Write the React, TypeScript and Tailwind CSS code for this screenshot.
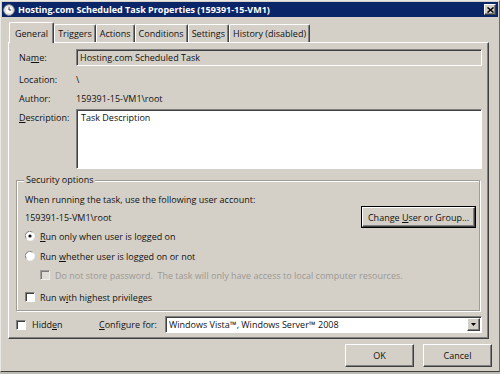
import type { ReactNode } from "react";

const raised =
  "border border-t-white border-l-white border-r-[#404040] border-b-[#404040] shadow-[inset_-1px_-1px_0_#808080]";
const sunken =
  "border border-t-[#808080] border-l-[#808080] border-r-white border-b-white shadow-[inset_1px_1px_0_#404040]";

function ClockIcon() {
  return (
    <svg width="12" height="12" viewBox="0 0 12 12">
      <circle cx="6" cy="6" r="5.3" fill="#f4f4f4" stroke="#8a8a8a" strokeWidth="1" />
      <circle cx="6" cy="6" r="3.8" fill="#fff" stroke="#c9c9c9" strokeWidth="0.6" />
      <path d="M6 3.2V6h2.2" stroke="#333" strokeWidth="1" fill="none" />
    </svg>
  );
}

function Radio({ checked }: { checked?: boolean }) {
  return (
    <svg width="10" height="10" viewBox="0 0 10 10" className="shrink-0">
      <circle cx="5" cy="5" r="4.5" fill="#fff" />
      <path d="M1.2 7.5A4.5 4.5 0 0 1 7.5 1.2" stroke="#808080" strokeWidth="1" fill="none" />
      <path d="M8.8 2.5A4.5 4.5 0 0 1 2.5 8.8" stroke="#f0f0f0" strokeWidth="1" fill="none" />
      {checked && <circle cx="5" cy="5" r="1.6" fill="#111" />}
    </svg>
  );
}

function Check({ disabled }: { disabled?: boolean }) {
  return (
    <span
      className={`block h-[10px] w-[10px] shrink-0 ${sunken} ${
        disabled ? "bg-[#e6e4df] opacity-60" : "bg-white"
      }`}
    />
  );
}

function Tab({ children, active }: { children: ReactNode; active?: boolean }) {
  if (active) {
    return (
      <div className="relative z-10 -mb-px flex h-[21px] items-center rounded-t-[2px] border border-b-0 border-t-white border-l-white border-r-[#404040] bg-[#d4d0c8] px-[5px] shadow-[inset_-1px_0_0_#808080]">
        {children}
      </div>
    );
  }
  return (
    <div className="flex h-[18px] items-center rounded-t-[2px] border border-b-0 border-t-white border-l-white border-r-[#404040] px-[3px] shadow-[inset_-1px_0_0_#808080]">
      {children}
    </div>
  );
}

function Button({ children, strong, className }: { children: ReactNode; strong?: boolean; className?: string }) {
  return (
    <div
      className={`flex items-center justify-center bg-[#d4d0c8] ${
        strong ? "outline outline-1 outline-black" : ""
      } ${raised} ${className ?? ""}`}
    >
      <span>{children}</span>
    </div>
  );
}

export default function App() {
  return (
    <div className="h-[374px] w-[500px] overflow-hidden bg-[#bdbab4] font-['Open_Sans','Noto_Sans',sans-serif] text-[9px] leading-none text-[#111]">
      <div className="flex h-[372px] flex-col border border-t-[#ebe9e4] border-l-[#ebe9e4] border-r-[#6e6c68] border-b-[#404040] bg-[#d4d0c8] px-[1px] pt-[1px]">
        {/* Title bar */}
        <div className="flex h-[15px] items-center bg-[#0b2668] pl-[1px] pr-[2px]">
          <ClockIcon />
          <span className="ml-[3px] text-[9px] font-bold text-white">
            Hosting.com Scheduled Task Properties (159391-15-VM1)
          </span>
          <div className={`ml-auto flex h-[11px] w-[12px] items-center justify-center bg-[#d4d0c8] ${raised}`}>
            <svg width="7" height="6" viewBox="0 0 7 6">
              <path d="M0.5 0.5L6.5 5.5M6.5 0.5L0.5 5.5" stroke="#000" strokeWidth="1.5" />
            </svg>
          </div>
        </div>

        {/* Tabs */}
        <div className="ml-[6px] mt-[5px] flex w-[481px] items-end pl-[1px]">
          <Tab active>General</Tab>
          <Tab>Triggers</Tab>
          <Tab>Actions</Tab>
          <Tab>Conditions</Tab>
          <Tab>Settings</Tab>
          <Tab>History (disabled)</Tab>
        </div>

        {/* Panel */}
        <div className="ml-[6px] flex h-[297px] w-[481px] flex-col border border-t-white border-l-white border-r-[#404040] border-b-[#404040] pb-[5px] pl-[10px] pr-[6px] pt-[6px] shadow-[inset_-1px_-1px_0_#808080]">
          <div className="flex h-[17px] items-center">
            <span className="w-[57px]">
              Na<u>m</u>e:
            </span>
            <div className={`flex h-full flex-1 items-center bg-[#d4d0c8] pl-[3px] ${sunken}`}>
              Hosting.com Scheduled Task
            </div>
          </div>
          <div className="mt-[4px] flex h-[19px] items-center">
            <span className="w-[57px]">Location:</span>
            <span>\</span>
          </div>
          <div className="flex h-[19px] items-center">
            <span className="w-[57px]">Author:</span>
            <span>159391-15-VM1\root</span>
          </div>
          <div className="mt-[1px] flex h-[60px]">
            <span className="w-[57px] pt-[4px]">
              <u>D</u>escription:
            </span>
            <div className={`h-full flex-1 bg-white pl-[4px] pt-[3px] ${sunken}`}>Task Description</div>
          </div>

          {/* Security options */}
          <div className="relative -ml-[3px] mr-[2px] mt-[11px] flex h-[131px] flex-col border border-[#a09d97] pl-[8px] pr-[4px] shadow-[1px_1px_0_#fff,inset_1px_1px_0_#fff]">
            <span className="absolute -top-[6px] left-[7px] bg-[#d4d0c8] px-[2px]">Security options</span>
            <div className="mt-[10px] flex h-[16px] items-center">When running the task, use the following user account:</div>
            <div className="flex h-[20px] items-center justify-between">
              <span>159391-15-VM1\root</span>
              <Button strong className="h-[20px] w-[113px]">
                Change <u>U</u>ser or Group...
              </Button>
            </div>
            <div className="flex h-[18px] items-center gap-[5px]">
              <Radio checked />
              <span>
                <u>R</u>un only when user is logged on
              </span>
            </div>
            <div className="mt-[2px] flex h-[18px] items-center gap-[5px]">
              <Radio />
              <span>
                Run <u>w</u>hether user is logged on or not
              </span>
            </div>
            <div className="mt-[1px] flex h-[18px] items-center gap-[5px] pl-[15px] text-[#9b9893]">
              <Check disabled />
              <span>Do not store password.&nbsp; The task will only have access to local computer resources.</span>
            </div>
            <div className="mt-[4px] flex h-[18px] items-center gap-[5px]">
              <Check />
              <span>
                Run w<u>i</u>th highest privileges
              </span>
            </div>
          </div>

          {/* Hidden / configure */}
          <div className="-ml-[3px] mt-[5px] flex h-[17px] items-center">
            <div className="flex w-[83px] items-center gap-[6px]">
              <Check />
              <span>
                Hidd<u>e</u>n
              </span>
            </div>
            <span className="w-[66px]">
              <u>C</u>onfigure for:
            </span>
            <div className={`flex h-full flex-1 items-center bg-white pl-[3px] ${sunken}`}>
              <span className="flex-1">Windows Vista™, Windows Server™ 2008</span>
              <div className={`mr-[1px] flex h-[13px] w-[13px] items-center justify-center bg-[#d4d0c8] ${raised}`}>
                <svg width="5" height="3" viewBox="0 0 5 3">
                  <path d="M0 0H5L2.5 3Z" fill="#000" />
                </svg>
              </div>
            </div>
          </div>
        </div>

        {/* Buttons */}
        <div className="mr-[6px] mt-[5px] flex justify-end gap-[9px]">
          <Button className="h-[23px] w-[69px]">OK</Button>
          <Button className="h-[23px] w-[69px]">Cancel</Button>
        </div>
      </div>
    </div>
  );
}
